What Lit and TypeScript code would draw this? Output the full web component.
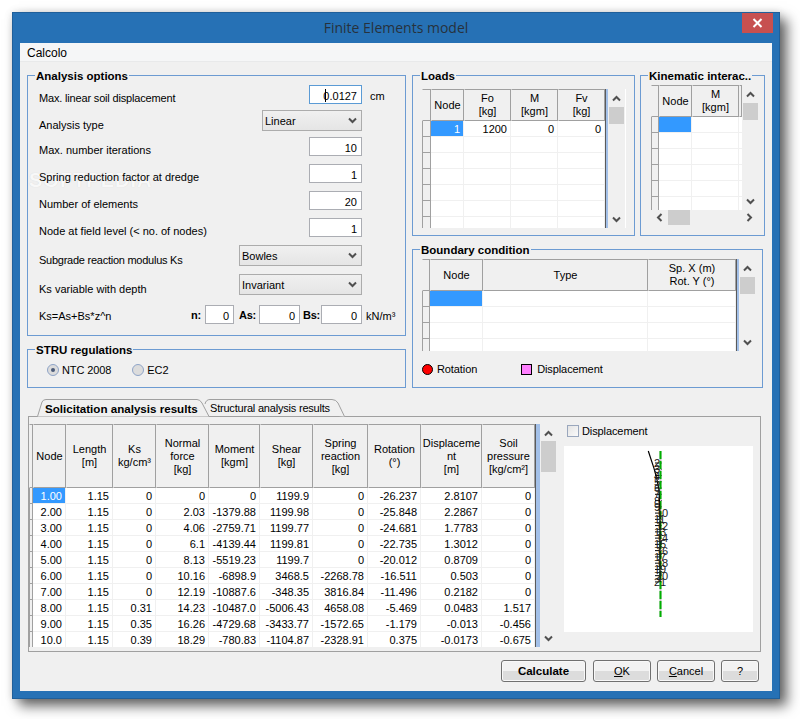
import { LitElement, html, css, svg } from "lit";
import { customElement } from "lit/decorators.js";

type Col = { w: number; label: string[] };

const upArrow = html`<svg class="arr" viewBox="0 0 9 7"><path d="M1 5.5 L4.5 2 L8 5.5" fill="none" stroke="#505050" stroke-width="2"/></svg>`;
const downArrow = html`<svg class="arr" viewBox="0 0 9 7"><path d="M1 1.5 L4.5 5 L8 1.5" fill="none" stroke="#505050" stroke-width="2"/></svg>`;
const leftArrow = html`<svg class="arr h" viewBox="0 0 7 9"><path d="M5.5 1 L2 4.5 L5.5 8" fill="none" stroke="#505050" stroke-width="2"/></svg>`;
const rightArrow = html`<svg class="arr h" viewBox="0 0 7 9"><path d="M1.5 1 L5 4.5 L1.5 8" fill="none" stroke="#505050" stroke-width="2"/></svg>`;

const resultCols: Col[] = [
  { w: 33, label: ["Node"] },
  { w: 47, label: ["Length", "[m]"] },
  { w: 43, label: ["Ks", "kg/cm³"] },
  { w: 53, label: ["Normal", "force", "[kg]"] },
  { w: 51, label: ["Moment", "[kgm]"] },
  { w: 53, label: ["Shear", "[kg]"] },
  { w: 55, label: ["Spring", "reaction", "[kg]"] },
  { w: 53, label: ["Rotation", "(°)"] },
  { w: 61, label: ["Displaceme", "nt", "[m]"] },
  { w: 53, label: ["Soil", "pressure", "[kg/cm²]"] },
];

const resultRows: string[][] = [
  ["1.00", "1.15", "0", "0", "0", "1199.9", "0", "-26.237", "2.8107", "0"],
  ["2.00", "1.15", "0", "2.03", "-1379.88", "1199.98", "0", "-25.848", "2.2867", "0"],
  ["3.00", "1.15", "0", "4.06", "-2759.71", "1199.77", "0", "-24.681", "1.7783", "0"],
  ["4.00", "1.15", "0", "6.1", "-4139.44", "1199.81", "0", "-22.735", "1.3012", "0"],
  ["5.00", "1.15", "0", "8.13", "-5519.23", "1199.7", "0", "-20.012", "0.8709", "0"],
  ["6.00", "1.15", "0", "10.16", "-6898.9", "3468.5", "-2268.78", "-16.511", "0.503", "0"],
  ["7.00", "1.15", "0", "12.19", "-10887.6", "-348.35", "3816.84", "-11.496", "0.2182", "0"],
  ["8.00", "1.15", "0.31", "14.23", "-10487.0", "-5006.43", "4658.08", "-5.469", "0.0483", "1.517"],
  ["9.00", "1.15", "0.35", "16.26", "-4729.68", "-3433.77", "-1572.65", "-1.179", "-0.013", "-0.456"],
  ["10.0", "1.15", "0.39", "18.29", "-780.83", "-1104.87", "-2328.91", "0.375", "-0.0173", "-0.675"],
];

const blank = (n: number, cols: number) => Array.from({ length: n }, () => Array(cols).fill(""));

@customElement("app-root")
export class AppRoot extends LitElement {
  static styles = css`
    :host { display: block; width: 800px; height: 719px; background: #fff; overflow: hidden; position: relative;
      font: 11px "Liberation Sans", Tahoma, sans-serif; color: #000; }
    * { box-sizing: border-box; }
    .win { position: absolute; left: 12px; top: 12px; width: 768px; height: 687px; background: #2671b5;
      border: 1px solid #1f5f9a; box-shadow: 7px 7px 12px rgba(0,0,0,.6), 0 0 8px rgba(0,0,0,.12);
      display: flex; flex-direction: column; padding: 0 7px 7px 7px; }
    .title { height: 30px; flex: none; display: flex; align-items: center; justify-content: center;
      font: 14px "Open Sans", sans-serif; color: #27323d; position: relative; padding-bottom: 2px; }
    .close { position: absolute; right: -1px; top: 0; width: 31px; height: 20px; background: #c75050; display: flex;
      align-items: center; justify-content: center; }
    .client { flex: 1; background: #f0f0f0; display: flex; flex-direction: column; min-height: 0; position: relative; }
    .menu { height: 19px; flex: none; background: #f5f6f7; border-bottom: 1px solid #e8e9ea; padding: 4px 0 0 7px; font-size: 12px; line-height: 13px; }
    .top { display: flex; height: 326px; padding: 13px 0 0 7px; flex: none; }
    .left { width: 379px; flex: none; display: flex; flex-direction: column; gap: 13px; }
    .right { margin-left: 6px; width: 353px; flex: none; display: flex; flex-direction: column; gap: 13px; }
    .rt { display: flex; gap: 5px; height: 161px; flex: none; }
    fieldset { margin: 0; border: 1px solid #6c9bd2; padding: 0; min-width: 0; position: relative; display: block; }
    .lg { position: absolute; top: -6px; left: 7px; background: #f0f0f0; padding: 0 1px; font-weight: 700; font-size: 11.5px; line-height: 13px; white-space: nowrap; z-index: 2; }
    .analysis { height: 261px; padding: 9px 43px 0 11px; }
    .row { display: flex; align-items: flex-start; justify-content: space-between; position: relative; z-index: 1; }
    .row label { margin-top: 6px; line-height: 14px; white-space: nowrap; }
    .row label.low { margin-top: 8px; }
    .row label.eq { margin-top: 4px; }
    .row label.tight { letter-spacing: -.17px; }
    .row label.tighter { letter-spacing: -.25px; }
    .ctl { width: 53px; height: 19px; background: #fff; border: 1px solid #abadb3; text-align: right; padding: 3px 4px 0 0; line-height: 14px; flex: none; }
    .ctl.focus { border-color: #5b9bd5; }
    .caret { display: inline-block; width: 1px; height: 13px; background: #000; vertical-align: -2px; margin-right: -3px; position: relative; }
    .sel { height: 21px; flex: none; border: 1px solid #acacac; background: linear-gradient(#f0f0f0, #e5e5e5);
      display: flex; align-items: center; justify-content: space-between; padding: 0 4px 0 2px; line-height: 14px; }
    .sel.w100 { width: 100px; }
    .sel.w123 { width: 123px; }
    .sel .arr { width: 9px; height: 7px; }
    .unit { position: absolute; left: 331px; top: 4px; line-height: 14px; }
    .inline { display: flex; align-items: flex-start; }
    .inline b { line-height: 14px; margin-top: 3px; white-space: nowrap; letter-spacing: -.3px; flex: none; }
    .inline .ctl { height: 19px; }
    .inline .kn { position: absolute; left: 327px; top: 4px; line-height: 14px; white-space: nowrap; }
    .bn { width: 11px; }
    .ba { width: 17px; }
    .bb { width: 15px; }
    .n { width: 29px; margin: 0 5px 0 3px; }
    .as { width: 41px; margin: 0 3px 0 3px; }
    .bs { width: 41px; margin-left: 3px; }
    .stru { height: 39px; display: flex; gap: 21px; padding: 13px 0 0 19px; }
    .radio { display: flex; align-items: center; gap: 3px; line-height: 14px; height: 14px; letter-spacing: -.1px; }
    .rb { width: 12px; height: 12px; border-radius: 50%; border: 1px solid #8ea4c8; background: #dcdcdc; display: flex; align-items: center; justify-content: center; }
    .rb i { width: 4px; height: 4px; border-radius: 50%; background: #4a5a78; display: block; }
    .loads { width: 223px; padding: 13px 0 0 9px; flex: none; }
    .kin { width: 125px; padding: 9px 0 0 10px; flex: none; }
    .bc { width: 351px; height: 139px; padding: 9px 0 0 9px; }
    .grid-wrap { display: flex; background: #fff; }
    .grid { overflow: hidden; flex: none; display: flex; flex-direction: column; }
    .ghead { display: flex; flex: none; }
    .gh { background: #f0f0f0; border: 1px solid #a0a0a0; border-left-color: #f0f0f0;
      display: flex; flex-direction: column; align-items: center; justify-content: center; line-height: 13px; text-align: center; flex: none; white-space: nowrap; overflow: hidden; }
    .gr { display: flex; height: 16px; flex: none; }
    .rh { background: #f0f0f0; border-right: 1px solid #a0a0a0; border-bottom: 1px solid #a0a0a0; border-left: 1px solid #a0a0a0; flex: none; }
    .gc { background: #fff; border-right: 1px solid #f0f0f0; border-bottom: 1px solid #f0f0f0; text-align: right; padding: 1px 3px 0 0; line-height: 14px; flex: none; white-space: nowrap; overflow: hidden; }
    .gc.sel-c { background: #3399ff; color: #fff; }
    .strip { background: #a3c0e8; border-left: 1px solid #5a5a5a; width: 3px; flex: none; }
    .strip.wide { width: 5px; }
    .vs { width: 17px; background: #f0f0f0; flex: none; position: relative; display: flex; flex-direction: column; align-items: center; }
    .arr { width: 9px; height: 7px; flex: none; display: block; }
    .arr.h { width: 7px; height: 9px; }
    .vs .up { position: absolute; top: 6px; }
    .vs .dn { position: absolute; bottom: 5px; }
    .vs .th { position: absolute; left: 1px; right: 1px; background: #cdcdcd; }
    .hs { height: 16px; background: #f0f0f0; position: relative; flex: none; }
    .hs .th { position: absolute; top: 0; bottom: 1px; background: #cdcdcd; width: 22px; left: 17px; }
    .hs .lf { position: absolute; left: 5px; top: 3px; }
    .hs .rg { position: absolute; right: 6px; top: 3px; }
    .legend { display: flex; align-items: center; margin-top: 11px; line-height: 14px; letter-spacing: -.1px; }
    .dot { width: 11px; height: 11px; border-radius: 50%; background: #ff0000; border: 1px solid #000; margin-right: 4px; }
    .sq { width: 11px; height: 11px; background: #ff80ff; border: 1px solid #000; margin: 0 5px 0 44px; }
    .tabs { display: flex; height: 19px; margin: 10px 0 0 17px; flex: none; position: relative; z-index: 1; }
    .tab { position: relative; height: 19px; display: flex; align-items: center; white-space: nowrap; line-height: 14px; }
    .tab svg { position: absolute; left: 0; top: 0; }
    .tab span { position: relative; }
    .tab.act { width: 173px; padding: 2px 0 0 8px; font-weight: 700; font-size: 11.6px; z-index: 2; }
    .tab.oth { width: 141px; margin-left: -6px; padding: 1px 0 0 6px; letter-spacing: -.2px; }
    .pane { margin: -1px 0 0 8px; width: 733px; height: 236px; border: 1px solid #a0a0a0; padding: 7px 0 0 0; display: flex; flex: none; }
    .side { margin-left: 7px; width: 190px; flex: none; display: flex; flex-direction: column; }
    .cb { display: flex; align-items: center; gap: 3px; height: 14px; margin-left: 3px; line-height: 14px; letter-spacing: -.1px; }
    .cb i { width: 12px; height: 12px; border: 1px solid #9aa7bd; background: linear-gradient(135deg, #e4e4e4, #fafafa); display: block; }
    .plot { margin-top: 8px; width: 189px; height: 186px; background: #fff; display: block; }
    .plot text { font: 11px "Liberation Sans", sans-serif; fill: #222; }
    .btns { display: flex; margin: 8px 0 0 481px; flex: none; }
    .btn { height: 22px; margin-right: 6px; border: 1px solid #707070; border-radius: 3px; background: linear-gradient(#f2f2f2 50%, #dcdcdc 50%);
      display: flex; align-items: center; justify-content: center; line-height: 14px; box-shadow: inset 0 0 0 1px #f8f8f8; flex: none; }
    .btn.calc { width: 85px; margin-right: 7px; font-weight: 700; font-size: 11.5px; }
    .btn.std { width: 58px; }
    .btn.help { width: 38px; margin-right: 0; }
    .wm { position: absolute; left: 1px; top: 93px; font: 700 20px "Liberation Sans", sans-serif; letter-spacing: 1px; color: #f8f8f8; text-shadow: 0 0 1px #d4d4d4; pointer-events: none; z-index: 0; }
  `;

  gridT(opts: { cols: Col[]; rhW: number; headH: number; rows: string[][]; height: number; sel?: [number, number] }) {
    const w = opts.rhW + opts.cols.reduce((a, c) => a + c.w, 0);
    return html`<div class="grid" style="width:${w}px;height:${opts.height}px">
      <div class="ghead" style="height:${opts.headH}px">
        <div class="gh" style="width:${opts.rhW}px"></div>
        ${opts.cols.map((c) => html`<div class="gh" style="width:${c.w}px">${c.label.map((l) => html`<span>${l}</span>`)}</div>`)}
      </div>
      ${opts.rows.map((r, ri) => html`<div class="gr">
        <div class="rh" style="width:${opts.rhW}px"></div>
        ${r.map((v, ci) => html`<div class="gc ${opts.sel && opts.sel[0] === ri && opts.sel[1] === ci ? "sel-c" : ""}" style="width:${opts.cols[ci].w}px">${v}</div>`)}
      </div>`)}
    </div>`;
  }

  vscroll(height: number, thumbTop: number, thumbH: number) {
    return html`<div class="vs" style="height:${height}px">
      <span class="up">${upArrow}</span>
      <div class="th" style="top:${thumbTop}px;height:${thumbH}px"></div>
      <span class="dn">${downArrow}</span>
    </div>`;
  }

  plot() {
    const ticks = [];
    const nums = [];
    for (let n = 2; n <= 21; n++) {
      const y = 21 + (n - 2) * 6.26;
      const x = n < 10 ? 90 : n % 2 === 0 ? 92 : 90;
      ticks.push(svg`<line x1="91" x2="98" y1=${y - 4} y2=${y - 4} stroke="#000"/>`);
      nums.push(svg`<text x=${x} y=${y}>${n}</text>`);
    }
    return html`<svg class="plot" viewBox="0 0 189 186">
      ${ticks}
      <line x1="96.5" y1="5" x2="96.5" y2="171" stroke="#c8c8c8" stroke-width="2"/>
      <line x1="96.5" y1="5" x2="96.5" y2="171" stroke="#00b000" stroke-width="2" stroke-dasharray="8 2"/>
      <polyline points="84.3,5 90,22.3 92.7,32.3 95,44 96,69 96,136" fill="none" stroke="#000" stroke-width="1.2"/>
      ${nums}
    </svg>`;
  }

  render() {
    const rowsH = [25, 27, 27, 27, 27, 27, 29, 31, 20];
    return html`<div class="win">
      <div class="title">Finite Elements model
        <div class="close"><svg width="11" height="10" viewBox="0 0 11 10"><path d="M1.5 1 L9.5 9 M9.5 1 L1.5 9" stroke="#fff" stroke-width="2"/></svg></div>
      </div>
      <div class="client">
        <div class="menu">Calcolo</div>
        <div class="top">
          <div class="left">
            <fieldset class="analysis">
              <div class="lg">Analysis options</div>
              <div class="wm">SOFTPEDIA</div>
              <div class="row" style="height:${rowsH[0]}px"><label class="tight">Max. linear soil displacement</label><div class="ctl focus"><span class="caret"></span>0.0127</div><span class="unit">cm</span></div>
              <div class="row" style="height:${rowsH[1]}px"><label class="low">Analysis type</label><div class="sel w100"><span>Linear</span>${downArrow}</div></div>
              <div class="row" style="height:${rowsH[2]}px"><label>Max. number iterations</label><div class="ctl">10</div></div>
              <div class="row" style="height:${rowsH[3]}px"><label>Spring reduction factor at dredge</label><div class="ctl">1</div></div>
              <div class="row" style="height:${rowsH[4]}px"><label>Number of elements</label><div class="ctl">20</div></div>
              <div class="row" style="height:${rowsH[5]}px"><label>Node at field level (&lt; no. of nodes)</label><div class="ctl">1</div></div>
              <div class="row" style="height:${rowsH[6]}px"><label class="low tighter">Subgrade reaction modulus Ks</label><div class="sel w123"><span>Bowles</span>${downArrow}</div></div>
              <div class="row" style="height:${rowsH[7]}px"><label class="low">Ks variable with depth</label><div class="sel w123"><span>Invariant</span>${downArrow}</div></div>
              <div class="row" style="height:${rowsH[8]}px"><label class="eq">Ks=As+Bs*z^n</label>
                <div class="inline"><b class="bn">n:</b><div class="ctl n">0</div><b class="ba">As:</b><div class="ctl as">0</div><b class="bb">Bs:</b><div class="ctl bs">0</div><span class="kn">kN/m³</span></div>
              </div>
            </fieldset>
            <fieldset class="stru">
              <div class="lg">STRU regulations</div>
              <div class="radio"><span class="rb"><i></i></span>NTC 2008</div>
              <div class="radio"><span class="rb"></span>EC2</div>
            </fieldset>
          </div>
          <div class="right">
            <div class="rt">
              <fieldset class="loads">
                <div class="lg">Loads</div>
                <div class="grid-wrap" style="width:204px">
                  ${this.gridT({ cols: [{ w: 33, label: ["Node"] }, { w: 47, label: ["Fo", "[kg]"] }, { w: 47, label: ["M", "[kgm]"] }, { w: 47, label: ["Fv", "[kg]"] }], rhW: 9, headH: 32, height: 139,
                    rows: [["1", "1200", "0", "0"], ...blank(6, 4)], sel: [0, 0] })}
                  <div class="strip" style="height:139px"></div>
                  ${this.vscroll(139, 18, 17)}
                </div>
              </fieldset>
              <fieldset class="kin">
                <div class="lg">Kinematic interac..</div>
                <div class="grid-wrap" style="width:108px;flex-direction:column">
                  <div style="display:flex">
                    ${this.gridT({ cols: [{ w: 33, label: ["Node"] }, { w: 47, label: ["M", "[kgm]"] }, { w: 3, label: [""] }], rhW: 8, headH: 32, height: 125,
                      rows: blank(6, 3), sel: [0, 0] })}
                    ${this.vscroll(125, 18, 17)}
                  </div>
                  <div class="hs"><span class="lf">${leftArrow}</span><div class="th"></div><span class="rg">${rightArrow}</span></div>
                </div>
              </fieldset>
            </div>
            <fieldset class="bc">
              <div class="lg">Boundary condition</div>
              <div class="grid-wrap" style="width:332px">
                ${this.gridT({ cols: [{ w: 53, label: ["Node"] }, { w: 165, label: ["Type"] }, { w: 88, label: ["Sp. X (m)", "Rot. Y (°)"] }], rhW: 8, headH: 32, height: 92,
                  rows: blank(4, 3), sel: [0, 0] })}
                <div class="strip" style="height:92px"></div>
                ${this.vscroll(92, 18, 17)}
              </div>
              <div class="legend"><span class="dot"></span>Rotation<span class="sq"></span>Displacement</div>
            </fieldset>
          </div>
        </div>
        <div class="tabs">
          <div class="tab act">
            <svg width="173" height="19" viewBox="0 0 173 19"><path d="M0.5 18.5 L5 4 Q6 1.5 9 1.5 L160 1.5 Q163 1.5 165 5 L172 18.5" fill="#f0f0f0" stroke="#a0a0a0"/></svg>
            <span>Solicitation analysis results</span>
          </div>
          <div class="tab oth">
            <svg width="141" height="19" viewBox="0 0 141 19"><path d="M1 6 Q2 1.5 6 1.5 L128 1.5 Q132 1.5 134 5 L140.5 18.5" fill="#f0f0f0" stroke="#a0a0a0"/></svg>
            <span>Structural analysis results</span>
          </div>
        </div>
        <div class="pane">
          <div class="grid-wrap" style="height:223px">
            ${this.gridT({ cols: resultCols, rhW: 4, headH: 64, height: 223, rows: resultRows, sel: [0, 0] })}
            <div class="strip wide" style="height:223px"></div>
            ${this.vscroll(223, 17, 31)}
          </div>
          <div class="side">
            <div class="cb"><i></i>Displacement</div>
            ${this.plot()}
          </div>
        </div>
        <div class="btns">
          <div class="btn calc">Calculate</div>
          <div class="btn std"><span><u>O</u>K</span></div>
          <div class="btn std"><span><u>C</u>ancel</span></div>
          <div class="btn help">?</div>
        </div>
      </div>
    </div>`;
  }
}
